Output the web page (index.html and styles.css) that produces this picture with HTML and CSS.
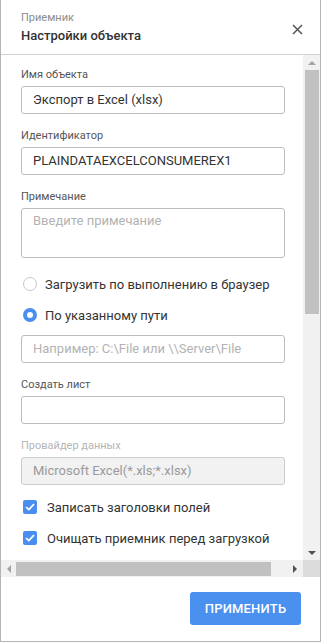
FILE: index.html
```html
<!DOCTYPE html>
<html lang="ru">
<head>
<meta charset="utf-8">
<link rel="stylesheet" href="styles.css">
</head>
<body>
<div class="dialog">
  <header class="head">
    <div class="titles">
      <div class="subtitle">Приемник</div>
      <div class="title">Настройки объекта</div>
    </div>
    <button class="close" aria-label="Закрыть">
      <svg width="11" height="11" viewBox="0 0 11 11"><path d="M1 1L10 10M10 1L1 10" stroke="#555" stroke-width="1.5" fill="none"/></svg>
    </button>
  </header>
  <div class="scroll">
    <div class="viewport">
      <div class="content">
        <div class="field">
          <div class="label">Имя объекта</div>
          <div class="input">Экспорт в Excel (xlsx)</div>
        </div>
        <div class="field">
          <div class="label">Идентификатор</div>
          <div class="input">PLAINDATAEXCELCONSUMEREX1</div>
        </div>
        <div class="field">
          <div class="label">Примечание</div>
          <div class="input textarea placeholder">Введите примечание</div>
        </div>
        <div class="radios">
          <div class="option"><span class="radio"></span><span>Загрузить по выполнению в браузер</span></div>
          <div class="option"><span class="radio on"></span><span>По указанному пути</span></div>
        </div>
        <div class="input path placeholder">Например: C:\File или \\Server\File</div>
        <div class="field">
          <div class="label">Создать лист</div>
          <div class="input"></div>
        </div>
        <div class="field">
          <div class="label disabled">Провайдер данных</div>
          <div class="input disabled">Microsoft Excel(*.xls;*.xlsx)</div>
        </div>
        <div class="checks">
          <div class="option"><span class="check"><svg width="10" height="8" viewBox="0 0 10 8"><path d="M1 4L3.8 6.6L9 1.2" stroke="#fff" stroke-width="1.7" fill="none"/></svg></span><span>Записать заголовки полей</span></div>
          <div class="option"><span class="check"><svg width="10" height="8" viewBox="0 0 10 8"><path d="M1 4L3.8 6.6L9 1.2" stroke="#fff" stroke-width="1.7" fill="none"/></svg></span><span>Очищать приемник перед загрузкой</span></div>
        </div>
      </div>
    </div>
    <div class="vbar">
      <span class="arrow up"></span>
      <div class="vtrack"><div class="vthumb"></div></div>
      <span class="arrow down"></span>
    </div>
    <div class="hbar">
      <span class="arrow left"></span>
      <div class="htrack"><div class="hthumb"></div></div>
      <span class="arrow right"></span>
    </div>
    <div class="corner"></div>
  </div>
  <footer class="foot">
    <button class="apply">ПРИМЕНИТЬ</button>
  </footer>
</div>
</body>
</html>
```
FILE: styles.css
```css
* { box-sizing: border-box; }
html, body { margin: 0; padding: 0; }
body {
  font-family: Roboto, "Liberation Sans", sans-serif;
  color: #333;
  background: #fff;
}
.dialog {
  width: 321px;
  height: 642px;
  border: 1px solid #b4b4b4;
  border-top: none;
  display: flex;
  flex-direction: column;
}
.head {
  height: 55px;
  flex: none;
  border-bottom: 1px solid #d2d2d2;
  display: flex;
  align-items: center;
  justify-content: space-between;
  padding: 0 20px 0 20px;
}
.subtitle {
  font-size: 11px;
  color: #8c8c8c;
  line-height: 14px;
}
.title {
  font-size: 13px;
  font-weight: 500;
  color: #333;
  line-height: 17px;
  margin-top: 2px;
}
.close {
  border: none;
  background: none;
  padding: 0;
  width: 16px;
  height: 16px;
  display: flex;
  align-items: center;
  justify-content: center;
  margin-right: -5px;
  margin-top: 4px;
}
.scroll {
  height: 522px;
  flex: none;
  display: grid;
  grid-template-columns: 1fr 17px;
  grid-template-rows: 1fr 17px;
}
.viewport { overflow: hidden; }
.content {
  width: 326px;
  padding: 13px 0 0 20px;
}
.field { margin-top: 15px; }
.field:first-child { margin-top: 0; }
.label {
  font-size: 11px;
  line-height: 14px;
  color: #555;
  margin-bottom: 4px;
}
.label.disabled { color: #b5b5b5; }
.input {
  width: 264px;
  height: 28px;
  border: 1px solid #bdbdbd;
  border-radius: 3px;
  font-size: 13px;
  line-height: 26px;
  padding: 0 11px;
  color: #333;
  white-space: nowrap;
}
.input.textarea { height: 50px; line-height: 24px; }
.placeholder { color: #b3b3b3; }
.input.disabled {
  background: #f2f2f2;
  border-color: #cccccc;
  color: #9a9a9a;
}
.radios {
  margin-top: 16px;
  display: flex;
  flex-direction: column;
  gap: 11px;
}
.option {
  display: flex;
  align-items: center;
  height: 20px;
  font-size: 13px;
  color: #333;
  white-space: nowrap;
}
.radio {
  width: 14px;
  height: 14px;
  border-radius: 50%;
  border: 1px solid #c8c8c8;
  margin: 0 8px 0 2px;
  flex: none;
  background: #fff;
}
.radio.on {
  border: 4px solid #4a8ff0;
  background: #fff;
}
.path { margin-top: 10px; }
.checks {
  margin-top: 12px;
  display: flex;
  flex-direction: column;
  gap: 11px;
}
.check {
  width: 14px;
  height: 14px;
  border-radius: 2px;
  background: #4a8ff0;
  margin: 0 10px 0 2px;
  display: flex;
  align-items: center;
  justify-content: center;
  flex: none;
}

/* scrollbars */
.vbar {
  background: #f1f1f1;
  display: flex;
  flex-direction: column;
  align-items: center;
}
.vtrack {
  flex: 1;
  width: 100%;
  padding: 1px 1px 0 2px;
}
.vthumb {
  height: 244px;
  background: #c1c1c1;
}
.hbar {
  background: #f1f1f1;
  display: flex;
  align-items: center;
}
.htrack {
  flex: 1;
  height: 100%;
  padding: 2px 0 1px 2px;
}
.hthumb {
  width: 255px;
  height: 100%;
  background: #c1c1c1;
}
.corner { background: #dcdcdc; }
.arrow {
  flex: none;
  width: 0;
  height: 0;
  border: 4px solid transparent;
}
.arrow.up {
  margin: 6px 0 4px;
  border-top-width: 0;
  border-bottom-color: #a3a3a3;
}
.arrow.down {
  margin: 6px 0 5px;
  border-bottom-width: 0;
  border-top-color: #505050;
}
.arrow.left {
  margin: 0 3px 0 6px;
  border-left-width: 0;
  border-right-color: #a3a3a3;
}
.arrow.right {
  margin: 0 6px 0 4px;
  border-right-width: 0;
  border-left-color: #505050;
}

.foot {
  flex: 1;
  display: flex;
  justify-content: flex-end;
  padding: 15px 19px 0 0;
}
.apply {
  width: 111px;
  height: 33px;
  border: none;
  border-radius: 3px;
  background: #4a90ef;
  color: #fff;
  font-family: Roboto, "Liberation Sans", sans-serif;
  font-size: 13px;
  font-weight: 500;
  letter-spacing: 0.2px;
}
```
